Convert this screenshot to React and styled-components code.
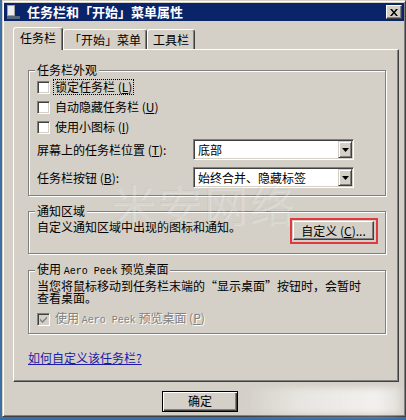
import React from 'react'
import styled, { createGlobalStyle } from 'styled-components'

const ui = {
  face: '#d4d0c8',
  shadow: '#808080',
  dark: '#404040',
  light: '#ffffff',
  title: '#0a246a',
  desk: '#3a6ea5',
}

const cjk = `"Noto Sans CJK SC", "Noto Sans", sans-serif`

const GlobalStyle = createGlobalStyle`
  html, body { margin: 0; padding: 0; background: ${ui.desk}; }
  body {
    width: 406px;
    height: 420px;
    overflow: hidden;
    font-family: ${cjk};
    font-size: 12px;
    line-height: 12px;
    color: #000;
  }
`

const Window = styled.div`
  position: relative;
  box-sizing: border-box;
  width: 404px;
  height: 417px;
  margin-left: 2px;
  padding: 2px 1px 1px 1px;
  background: ${ui.face};
  border: 1px solid;
  border-color: ${ui.face} ${ui.dark} ${ui.dark} ${ui.face};
  box-shadow: inset 1px 1px ${ui.light}, inset -1px -1px ${ui.shadow};
`

const TitleBar = styled.div`
  display: flex;
  align-items: center;
  height: 18px;
  padding: 0 2px;
  background: ${ui.title};
`

const TitleText = styled.span`
  margin-left: 5px;
  color: #fff;
  font-weight: bold;
  font-size: 13px;
  line-height: 18px;
`

const CloseButton = styled.div`
  box-sizing: border-box;
  display: flex;
  align-items: center;
  justify-content: center;
  width: 16px;
  height: 14px;
  margin-left: auto;
  background: ${ui.face};
  border: 1px solid;
  border-color: ${ui.light} ${ui.dark} ${ui.dark} ${ui.light};
  box-shadow: inset -1px -1px ${ui.shadow};
`

const Body = styled.div`
  padding-left: 9px;
`

const TabStrip = styled.div`
  display: flex;
  align-items: flex-end;
  height: 22px;
  margin-top: 6px;
`

const Tab = styled.div`
  position: relative;
  z-index: ${p => (p.$active ? 2 : 1)};
  box-sizing: border-box;
  display: flex;
  align-items: center;
  height: ${p => (p.$active ? 23 : 20)}px;
  margin-bottom: ${p => (p.$active ? -1 : 0)}px;
  padding: 0 ${p => (p.$active ? 6 : 5)}px ${p => (p.$active ? 2 : 0)}px;
  background: ${ui.face};
  border-top: 1px solid ${ui.light};
  border-left: 1px solid ${ui.light};
  border-right: 1px solid ${ui.dark};
  border-radius: 3px 3px 0 0;
  box-shadow: inset -1px 0 ${ui.shadow};
  white-space: nowrap;
`

const Panel = styled.div`
  position: relative;
  box-sizing: border-box;
  width: 386px;
  height: 333px;
  padding: 14px 0 0 14px;
  border: 1px solid;
  border-color: ${ui.light} ${ui.dark} ${ui.dark} ${ui.light};
  box-shadow: inset -1px -1px ${ui.shadow};
`

const Group = styled.fieldset`
  box-sizing: border-box;
  width: 358px;
  min-width: 0;
  margin: ${p => p.$gap || 0}px 0 0 0;
  padding: ${p => p.$pad || '1px 7px 7px 8px'};
  border: 1px solid ${ui.shadow};
  box-shadow: inset 1px 1px ${ui.light}, 1px 1px ${ui.light};
`

const Legend = styled.legend`
  margin-left: -2px;
  padding: 0 2px;
  font-size: 12px;
  line-height: 12px;
  background: ${ui.face};
`

const CheckRow = styled.div`
  display: flex;
  align-items: center;
  gap: 3px;
  height: ${p => p.$h || 20}px;
  margin-top: ${p => p.$gap || 0}px;
  white-space: nowrap;
  color: ${p => (p.$disabled ? ui.shadow : '#000')};
  text-shadow: ${p => (p.$disabled ? `1px 1px ${ui.light}` : 'none')};
`

const Box = styled.span`
  box-sizing: border-box;
  display: flex;
  align-items: center;
  justify-content: center;
  flex: none;
  width: 13px;
  height: 13px;
  background: ${p => (p.$disabled ? ui.face : ui.light)};
  border: 1px solid;
  border-color: ${ui.shadow} ${ui.light} ${ui.light} ${ui.shadow};
  box-shadow: inset 1px 1px ${ui.dark}, inset -1px -1px ${ui.face};
`

const Caption = styled.span`
  padding: 1px 1px;
  border: 1px ${p => (p.$focus ? 'dotted #000' : 'solid transparent')};
`

const Key = styled.span`
  text-decoration: underline;
`

const Mono = styled.span`
  font-family: "Liberation Mono", monospace;
  font-size: 10px;
`

const Quote = styled.span`
  display: inline-block;
  width: 12px;
  text-align: ${p => (p.$open ? 'right' : 'left')};
`

const FieldRow = styled.div`
  display: flex;
  align-items: center;
  margin-top: ${p => p.$gap || 0}px;
  white-space: nowrap;
`

const FieldLabel = styled.span`
  width: 156px;
  flex: none;
`

const Combo = styled.div`
  box-sizing: border-box;
  display: flex;
  align-items: center;
  width: 161px;
  height: 21px;
  padding: 0 1px 0 2px;
  background: ${ui.light};
  border: 1px solid;
  border-color: ${ui.shadow} ${ui.light} ${ui.light} ${ui.shadow};
  box-shadow: inset 1px 1px ${ui.dark}, inset -1px -1px ${ui.face};
`

const ComboText = styled.span`
  flex: 1;
  padding-left: 2px;
`

const DropButton = styled.span`
  box-sizing: border-box;
  display: flex;
  align-items: center;
  justify-content: center;
  width: 14px;
  height: 17px;
  background: ${ui.face};
  border: 1px solid;
  border-color: ${ui.face} ${ui.dark} ${ui.dark} ${ui.face};
  box-shadow: inset 1px 1px ${ui.light}, inset -1px -1px ${ui.shadow};
`

const NoteRow = styled.div`
  display: flex;
  justify-content: space-between;
  align-items: flex-start;
`

const NoteText = styled.span`
  margin-top: 3px;
  white-space: nowrap;
`

const Highlight = styled.div`
  padding: 1px 2px 2px 1px;
  border: 2px solid #df3b3f;
`

const Button = styled.div`
  box-sizing: border-box;
  display: flex;
  align-items: center;
  justify-content: center;
  width: ${p => p.$w}px;
  height: ${p => p.$h}px;
  background: ${ui.face};
  border: 1px solid;
  border-color: ${p => (p.$default ? '#000' : `${ui.light} ${ui.dark} ${ui.dark} ${ui.light}`)};
  box-shadow: ${p =>
    p.$default
      ? `inset 1px 1px ${ui.light}, inset -1px -1px ${ui.dark}, inset -2px -2px ${ui.shadow}`
      : `inset -1px -1px ${ui.shadow}`};
  white-space: nowrap;
`

const Paragraph = styled.div`
  line-height: 12px;
  white-space: nowrap;
`

const HelpLink = styled.a`
  display: inline-block;
  margin-top: 18px;
  color: #1c1ca8;
  text-decoration: underline;
  line-height: 12px;
`

const Footer = styled.div`
  display: flex;
  align-items: center;
  margin-top: 6px;
  padding-left: 149px;
`

const Smear = styled.div`
  flex: 1;
  height: 26px;
  margin: 0 4px 0 6px;
  background: linear-gradient(90deg, rgba(255,255,255,0) 0%, rgba(255,255,255,0.45) 35%, rgba(255,255,255,0.7) 85%, rgba(255,255,255,0.35) 100%);
  filter: blur(3px);
`

const Watermark = styled.div`
  position: absolute;
  left: 108px;
  top: 178px;
  font-size: 44px;
  line-height: 48px;
  letter-spacing: 2px;
  color: rgba(0, 0, 0, 0.04);
  text-shadow: 1px 1px rgba(255, 255, 255, 0.25);
  pointer-events: none;
`

const AppIcon = () => (
  <svg width="16" height="16" viewBox="0 0 16 16">
    <rect x="1.5" y="1.5" width="7" height="10" fill="#ececec" stroke="#a0a0a0" />
    <rect x="1" y="12" width="13" height="3" fill="#56657f" />
  </svg>
)

const CloseGlyph = () => (
  <svg width="8" height="7" viewBox="0 0 8 7">
    <path d="M0 0h2l2 2.5L6 0h2L5 3.5 8 7H6L4 4.5 2 7H0l3-3.5z" fill="#000" />
  </svg>
)

const Arrow = () => (
  <svg width="7" height="4" viewBox="0 0 7 4">
    <path d="M0 0h7L3.5 4z" fill="#000" />
  </svg>
)

const Tick = ({ color }) => (
  <svg width="7" height="7" viewBox="0 0 7 7">
    <path d="M0 2.5l2.5 2.5L7 0.5v2L2.5 7 0 4.5z" fill={color} />
  </svg>
)

const Check = ({ checked, disabled, focus, children }) => (
  <CheckRow $disabled={disabled} $h={disabled ? 13 : 20} $gap={disabled ? 9 : 0}>
    <Box $disabled={disabled}>{checked && <Tick color={disabled ? ui.shadow : '#000'} />}</Box>
    <Caption $focus={focus}>{children}</Caption>
  </CheckRow>
)

const Select = ({ label, value, gap }) => (
  <FieldRow $gap={gap}>
    <FieldLabel>{label}</FieldLabel>
    <Combo>
      <ComboText>{value}</ComboText>
      <DropButton><Arrow /></DropButton>
    </Combo>
  </FieldRow>
)

const tabs = ['任务栏', '「开始」菜单', '工具栏']

export default function App() {
  return (
    <>
      <GlobalStyle />
      <Window>
        <TitleBar>
          <AppIcon />
          <TitleText>任务栏和「开始」菜单属性</TitleText>
          <CloseButton><CloseGlyph /></CloseButton>
        </TitleBar>
        <Body>
          <TabStrip>
            {tabs.map((t, i) => (
              <Tab key={t} $active={i === 0}>{t}</Tab>
            ))}
          </TabStrip>
          <Panel>
            <Group>
              <Legend>任务栏外观</Legend>
              <Check focus>锁定任务栏 (<Key>L</Key>)</Check>
              <Check>自动隐藏任务栏 (<Key>U</Key>)</Check>
              <Check>使用小图标 (<Key>I</Key>)</Check>
              <Select gap={2} label={<>屏幕上的任务栏位置 (<Key>T</Key>):</>} value="底部" />
              <Select gap={7} label={<>任务栏按钮 (<Key>B</Key>):</>} value="始终合并、隐藏标签" />
            </Group>
            <Group $gap={9} $pad="1px 7px 9px 8px">
              <Legend>通知区域</Legend>
              <NoteRow>
                <NoteText>自定义通知区域中出现的图标和通知。</NoteText>
                <Highlight>
                  <Button $w={81} $h={19}>自定义 (<Key>C</Key>)...</Button>
                </Highlight>
              </NoteRow>
            </Group>
            <Group $gap={9} $pad="2px 7px 7px 8px">
              <Legend>使用 <Mono>Aero Peek</Mono> 预览桌面</Legend>
              <Paragraph>
                当您将鼠标移动到任务栏末端的<Quote $open>“</Quote>显示桌面<Quote>”</Quote>按钮时，会暂时
              </Paragraph>
              <Paragraph>查看桌面。</Paragraph>
              <Check checked disabled>使用 <Mono>Aero Peek</Mono> 预览桌面 (<Key>P</Key>)</Check>
            </Group>
            <HelpLink>如何自定义该任务栏?</HelpLink>
          </Panel>
          <Footer>
            <Button $default $w={76} $h={21}>确定</Button>
            <Smear />
          </Footer>
        </Body>
        <Watermark>米安网络</Watermark>
      </Window>
    </>
  )
}
